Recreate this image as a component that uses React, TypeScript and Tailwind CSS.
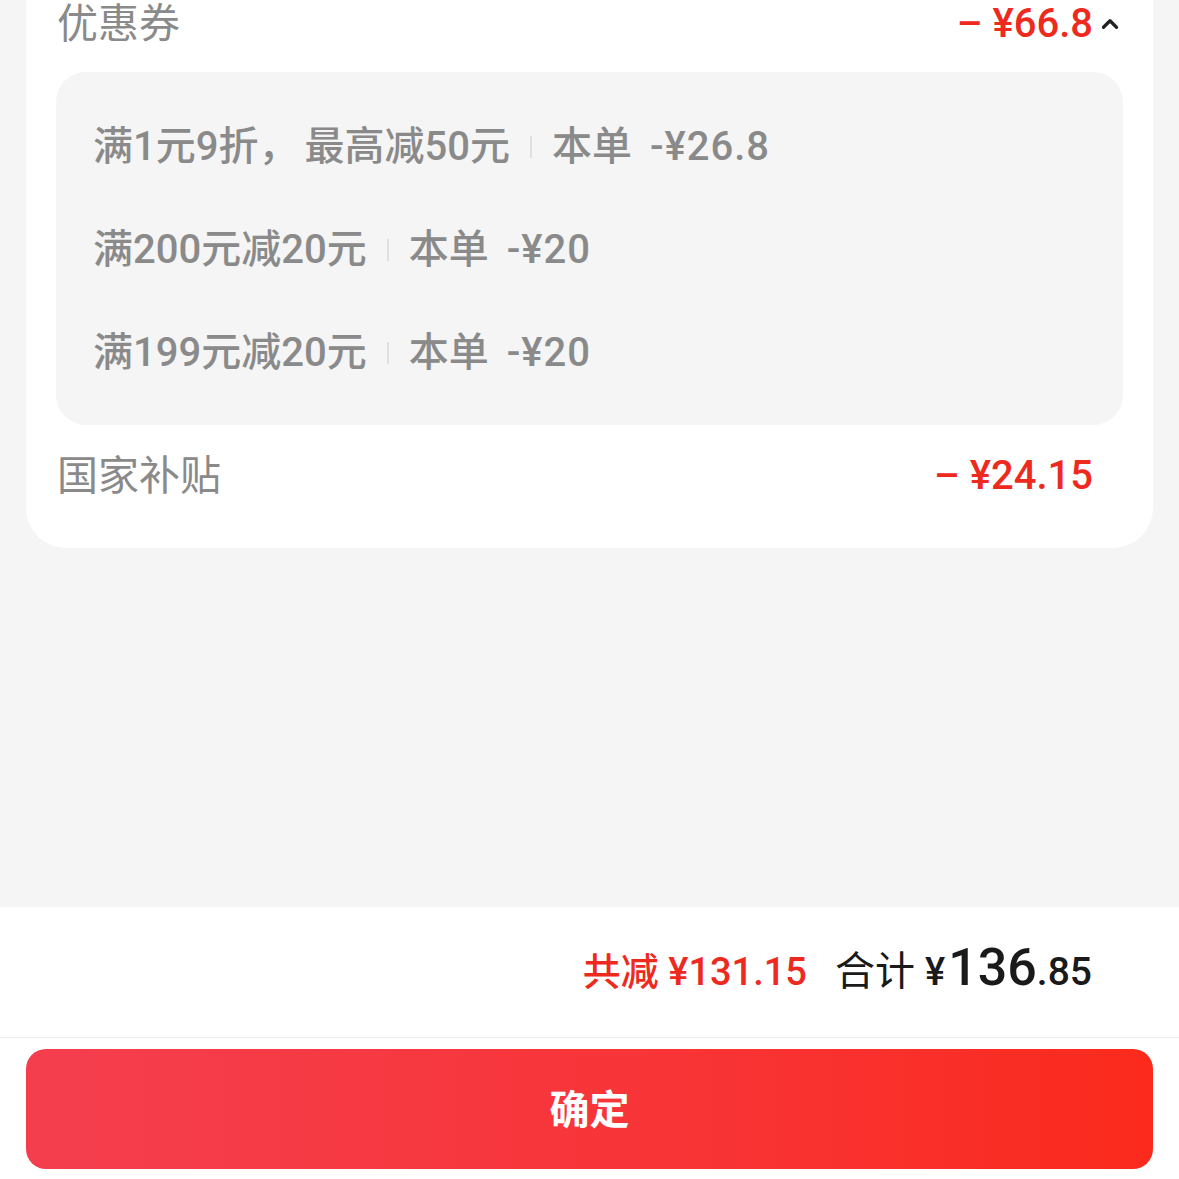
import React from 'react';
import { ChevronUp } from 'lucide-react';

const coupons = [
  { rule: '满1元9折，', rest: '最高减50元', save: '-¥26.8' },
  { rule: '满200元减20元', rest: '', save: '-¥20' },
  { rule: '满199元减20元', rest: '', save: '-¥20' },
];

export default function App() {
  return (
    <div
      className="flex h-[1179px] w-[1179px] flex-col overflow-hidden bg-[#f5f5f5]"
      style={{ fontFamily: 'Roboto, "Noto Sans CJK SC", sans-serif' }}
    >
      {/* discount card */}
      <div className="mx-[26px] rounded-b-[40px] bg-white px-[30px] pb-[50px]">
        <div className="flex h-[46px] items-center justify-between pt-[2px]">
          <span className="pl-[1px] text-[41px] leading-none text-[#8a8a8a]">优惠券</span>
          <div className="flex items-center">
            <span className="text-[40px] leading-none font-medium text-[#ee2a1e]">
              <span className="mr-[10px]">–</span>¥66.8
            </span>
            <div className="flex w-[30px] justify-end">
              <ChevronUp className="h-[26px] w-[26px] text-[#222]" strokeWidth={3} />
            </div>
          </div>
        </div>

        <div className="mt-[26px] flex flex-col gap-[51px] rounded-[30px] bg-[#f5f5f5] px-[37px] pt-[49px] pb-[46px]">
          {coupons.map((c) => (
            <div key={c.rule} className="flex h-[52px] items-center text-[40px] font-medium text-[#8a8a8a]">
              <span>{c.rule}</span>
              {c.rest && <span className="ml-[6px]">{c.rest}</span>}
              <span className="mx-[20px] h-[22px] w-[2px] bg-[#e0e0e0]" />
              <span>本单</span>
              <span className="ml-[18px] tracking-[1px]">{c.save}</span>
            </div>
          ))}
        </div>

        <div className="mt-[29px] flex h-[44px] items-center justify-between">
          <span className="pl-[1px] text-[41px] leading-none text-[#8a8a8a]">国家补贴</span>
          <div className="flex items-center">
            <span className="text-[40px] leading-none font-medium text-[#ee2a1e]">
              <span className="mr-[10px]">–</span>¥24.15
            </span>
            <div className="w-[30px]" />
          </div>
        </div>
      </div>

      <div className="flex-1" />

      {/* footer */}
      <div className="h-[272px] bg-white">
        <div className="flex h-[131px] items-center justify-end border-b border-[#eeeeee] pr-[87px]">
          <span className="text-[38px] font-medium text-[#ee2a1e]">共减 ¥131.15</span>
          <span className="ml-[28px] flex items-baseline text-[#1a1a1a]">
            <span className="text-[40px]">合计</span>
            <span className="ml-[10px] text-[38px] font-medium">¥</span>
            <span className="ml-[3px] text-[52px] font-medium leading-none">136</span>
            <span className="text-[39px] font-medium">.85</span>
          </span>
        </div>
        <div className="px-[26px] pt-[11px]">
          <button className="flex h-[120px] w-full items-center justify-center rounded-[20px] bg-gradient-to-r from-[#f43e4e] to-[#fb2a1b] pt-[4px] text-[40px] font-bold text-white">
            确定
          </button>
        </div>
      </div>
    </div>
  );
}
